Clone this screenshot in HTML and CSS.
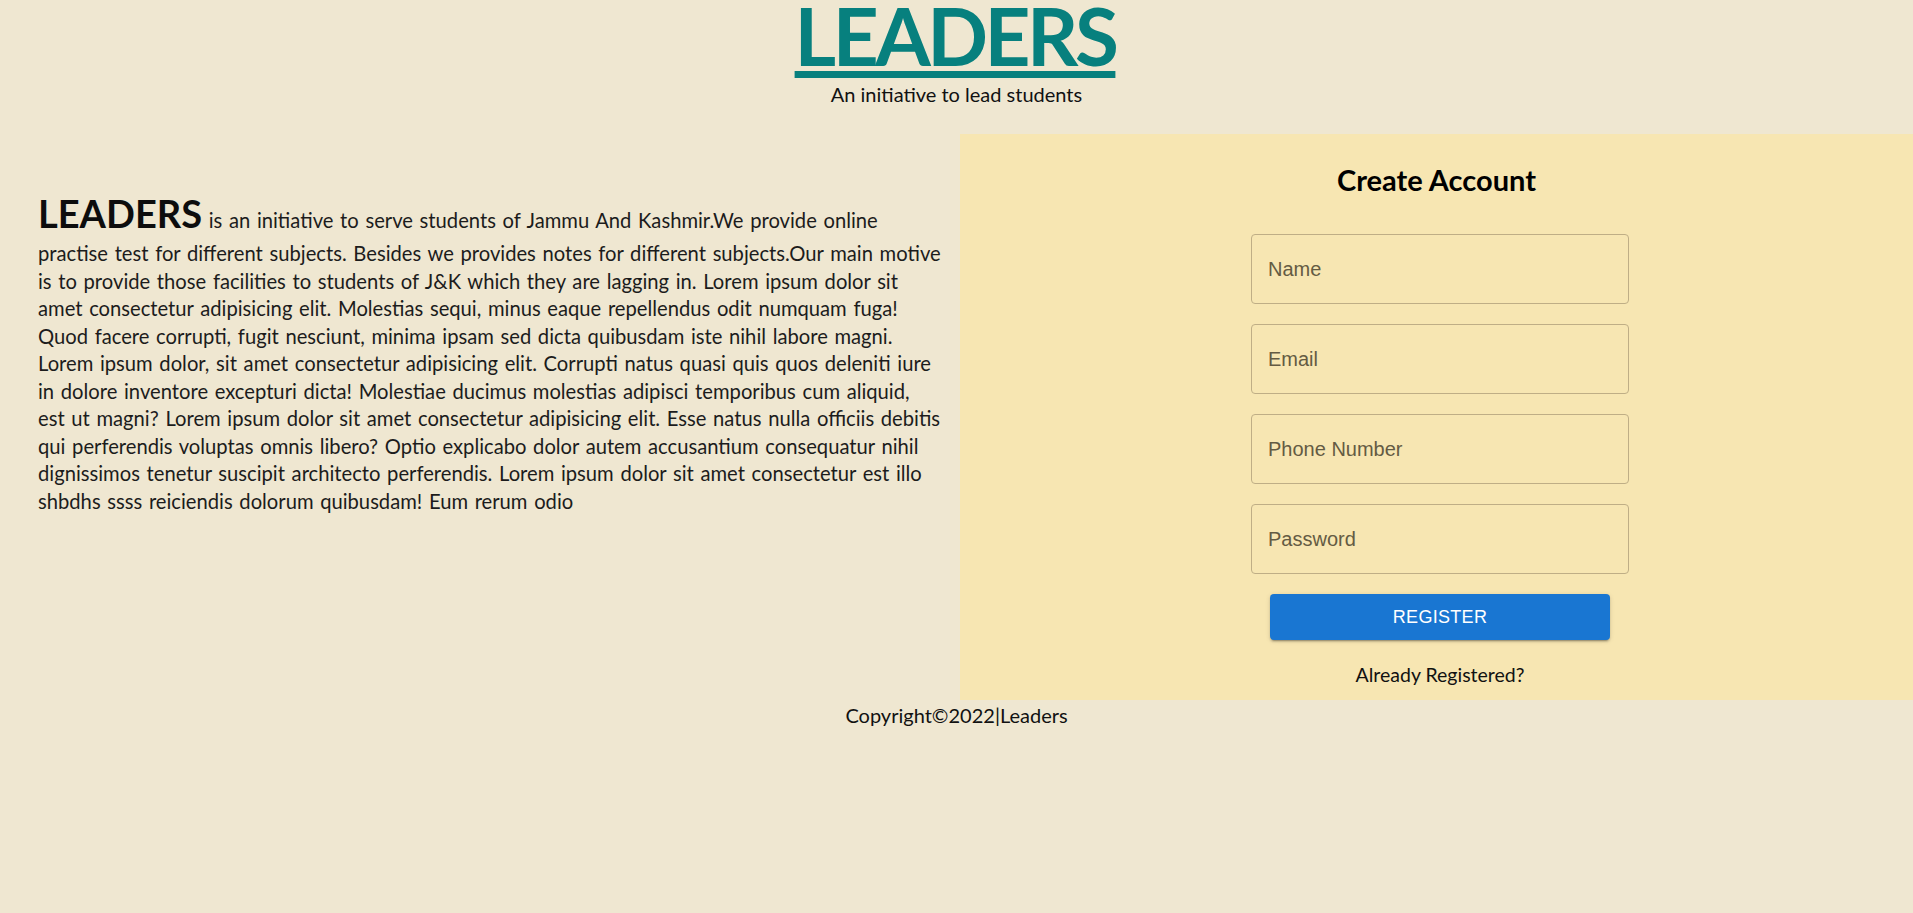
FILE: index.html
```html
<!DOCTYPE html>
<html lang="en">
<head>
<meta charset="utf-8">
<title>Leaders</title>
<link rel="stylesheet" href="styles.css">
</head>
<body>
<header class="site-header">
  <h1 class="brand">LEADERS</h1>
  <p class="tagline">An initiative to lead students</p>
</header>
<main class="main">
  <section class="about">
    <p class="about-text"><span class="about-brand">LEADERS</span> is an initiative to serve students of Jammu And Kashmir.We provide online practise test for different subjects. Besides we provides notes for different subjects.Our main motive is to provide those facilities to students of J&amp;K which they are lagging in. Lorem ipsum dolor sit amet consectetur adipisicing elit. Molestias sequi, minus eaque repellendus odit numquam fuga! Quod facere corrupti, fugit nesciunt, minima ipsam sed dicta quibusdam iste nihil labore magni. Lorem ipsum dolor, sit amet consectetur adipisicing elit. Corrupti natus quasi quis quos deleniti iure in dolore inventore excepturi dicta! Molestiae ducimus molestias adipisci temporibus cum aliquid, est ut magni? Lorem ipsum dolor sit amet consectetur adipisicing elit. Esse natus nulla officiis debitis qui perferendis voluptas omnis libero? Optio explicabo dolor autem accusantium consequatur nihil dignissimos tenetur suscipit architecto perferendis. Lorem ipsum dolor sit amet consectetur est illo shbdhs ssss reiciendis dolorum quibusdam! Eum rerum odio</p>
  </section>
  <section class="panel">
    <h2 class="panel-title">Create Account</h2>
    <form class="form">
      <input class="field" type="text" placeholder="Name">
      <input class="field" type="email" placeholder="Email">
      <input class="field" type="tel" placeholder="Phone Number">
      <input class="field" type="password" placeholder="Password">
      <button class="btn" type="button">REGISTER</button>
      <p class="already">Already Registered?</p>
    </form>
  </section>
</main>
<footer class="footer">Copyright©2022|Leaders</footer>
</body>
</html>
```

FILE: styles.css
```css
* { box-sizing: border-box; }

html, body {
  margin: 0;
  padding: 0;
}

body {
  background: #efe7d1;
  font-family: Lato, "Noto Sans", sans-serif;
  color: #1a1a1a;
  min-height: 913px;
}

.site-header {
  display: flex;
  flex-direction: column;
  align-items: center;
}

.brand {
  margin: 0;
  font-family: Lato, sans-serif;
  font-weight: 700;
  font-size: 80px;
  line-height: 70px;
  color: #07807e;
  text-decoration: underline;
  text-decoration-thickness: 7px;
  text-underline-offset: 5px;
  letter-spacing: -3.5px;
  padding-right: 3px;
}

.tagline {
  margin: 11px 0 0;
  font-family: Lato, sans-serif;
  font-size: 20px;
  line-height: 26px;
  color: #111;
}

.main {
  margin-top: 27px;
  display: grid;
  grid-template-columns: 960px 1fr;
}

.about {
  padding: 52px 18px 0 38px;
}

.about-text {
  margin: 0;
  font-size: 20.2px;
  line-height: 27.5px;
  word-spacing: 1.5px;
  color: #1c1c1c;
}

.about-brand {
  font-size: 38px;
  font-weight: 700;
  line-height: 54px;
  color: #0d0d0d;
}

.panel {
  background: #f7e6b2;
  padding: 28px 0 14px;
  display: flex;
  flex-direction: column;
  align-items: center;
}

.panel-title {
  margin: 0;
  font-size: 29px;
  font-weight: 700;
  line-height: 35px;
  color: #000;
}

.form {
  margin-top: 37px;
  width: 378px;
  display: flex;
  flex-direction: column;
  gap: 20px;
  margin-left: 7px;
}

.field {
  height: 70px;
  width: 100%;
  border: 1px solid #bfae86;
  border-radius: 4px;
  background: transparent;
  padding: 0 16px;
  font-family: "Liberation Sans", Arial, sans-serif;
  font-size: 20px;
  color: #222;
}

.field::placeholder {
  color: #645b43;
}

.btn {
  margin: 0 19px;
  height: 46px;
  border: none;
  border-radius: 4px;
  background: #1976d2;
  color: #fff;
  font-family: "Liberation Sans", Arial, sans-serif;
  font-size: 18px;
  letter-spacing: 0.3px;
  box-shadow: 0 3px 1px -2px rgba(0,0,0,.2), 0 2px 2px 0 rgba(0,0,0,.14), 0 1px 5px 0 rgba(0,0,0,.12);
}

.already {
  margin: 4px 0 0;
  text-align: center;
  font-size: 19.5px;
  line-height: 22px;
  color: #111;
}

.footer {
  margin-top: 4px;
  text-align: center;
  font-size: 20px;
  line-height: 23px;
  color: #111;
}
```
